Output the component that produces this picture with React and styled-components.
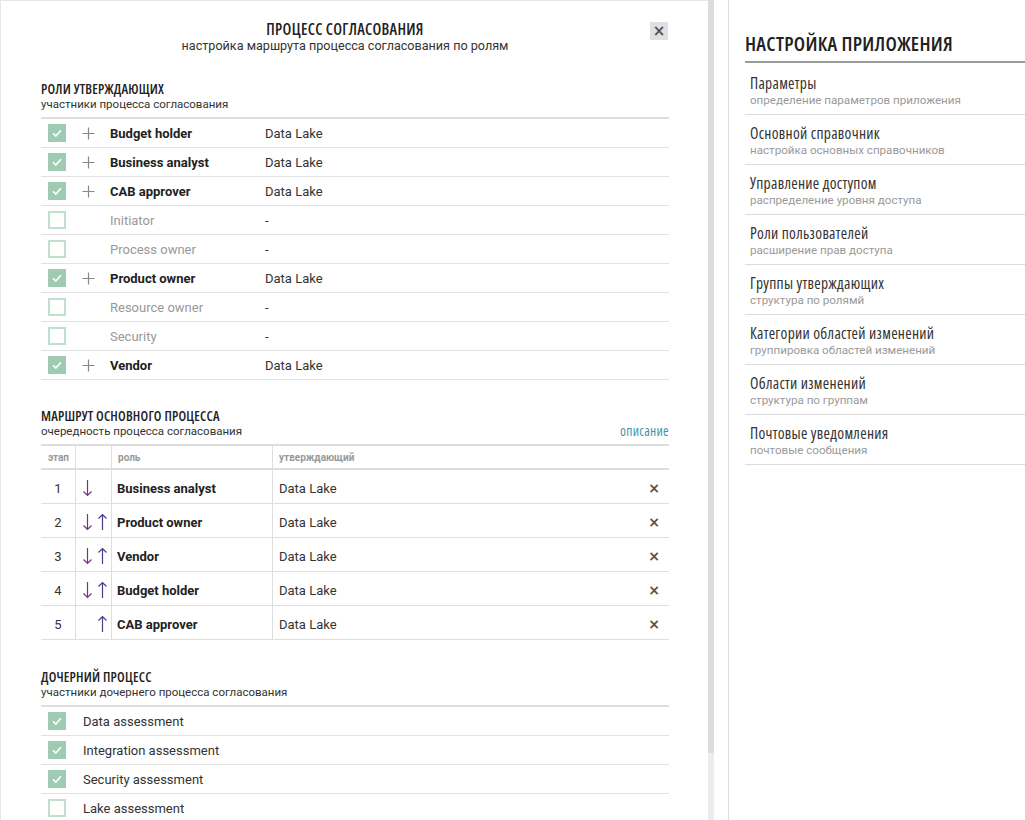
import React from "react";
import styled, { createGlobalStyle } from "styled-components";

const GlobalStyle = createGlobalStyle`
	html, body {
		margin: 0;
		padding: 0;
		background: #fff;
		font-family: Roboto, "Noto Sans", sans-serif;
		color: #222;
	}
	* { box-sizing: border-box; }
`;

const condensed = `
	font-family: "Open Sans", "DejaVu Sans Condensed", sans-serif;
	font-stretch: 75%;
`;

// Layout
const Page = styled.div`
	display: flex;
	width: 1025px;
	height: 820px;
	overflow: hidden;
`;

const Modal = styled.div`
	position: relative;
	width: 708px;
	height: 820px;
	border-top: 1px solid #e6e6e6;
	border-left: 1px solid #e6e6e6;
	padding: 0 39px 0 40px;
	overflow: hidden;
`;

const ScrollTrack = styled.div`
	width: 6px;
	height: 820px;
	background: #ececf0;
	display: flex;
	flex-direction: column;
`;

const ScrollThumb = styled.div`
	height: 753px;
	background: #dcdcdc;
`;

const Side = styled.aside`
	margin-left: 14px;
	flex: 1;
	border-left: 1px solid #dcdcdc;
	padding: 33px 0 0 16px;
`;

// Modal header
const Header = styled.div`
	padding: 19px 20px 0 0;
	text-align: center;
`;

const Title = styled.div`
	${condensed}
	font-weight: 600;
	font-size: 15.5px;
	letter-spacing: 0.3px;
	line-height: 18px;
	color: #222;
`;

const Subtitle = styled.div`
	font-size: 12.6px;
	line-height: 16px;
	color: #333;
`;

const CloseButton = styled.button`
	position: absolute;
	top: 21px;
	right: 40px;
	width: 18px;
	height: 18px;
	border: 0;
	padding: 0;
	background: #e0e0e0;
	color: #555;
	font-size: 15px;
	font-weight: 700;
	line-height: 18px;
	font-family: "DejaVu Sans", sans-serif;
`;

// Sections
const Section = styled.section`
	margin-top: ${(p) => p.$top}px;
`;

const SectionHead = styled.div`
	display: flex;
	justify-content: space-between;
	align-items: flex-end;
	padding-bottom: 5px;
	border-bottom: 2px solid #dedede;
`;

const SectionTitle = styled.div`
	${condensed}
	font-weight: 600;
	font-size: 13.5px;
	letter-spacing: 0.2px;
	line-height: 16px;
	color: #222;
`;

const SectionSub = styled.div`
	font-size: 11.5px;
	line-height: 15px;
	color: #333;
`;

const DescLink = styled.a`
	${condensed}
	font-size: 13.5px;
	letter-spacing: 0.3px;
	line-height: 15px;
	color: #3f93a8;
	text-decoration: none;
`;

// Role rows
const Row = styled.div`
	display: flex;
	align-items: center;
	height: 29px;
	border-bottom: 1px solid #e2e2e2;
	font-size: 13px;
`;

const CheckBox = styled.span`
	width: 18px;
	height: 18px;
	margin-left: 7px;
	flex: none;
	display: flex;
	align-items: center;
	justify-content: center;
	background: ${(p) => (p.$on ? "#9fcbb2" : "#fff")};
	border: ${(p) => (p.$on ? "none" : "2px solid #bfe0cc")};
`;

const PlusCell = styled.span`
	width: 44px;
	flex: none;
	display: flex;
	justify-content: center;
`;

const RoleName = styled.span`
	width: 155px;
	flex: none;
	font-weight: ${(p) => (p.$on ? 700 : 400)};
	color: ${(p) => (p.$on ? "#222" : "#999")};
`;

const RoleValue = styled.span`
	color: #333;
`;

const ChildLabel = styled.span`
	margin-left: 17px;
	color: #333;
`;

// Route table
const Table = styled.div`
	display: grid;
	grid-template-columns: 35px 36px 161px 1fr 30px;
`;

const HeadCell = styled.div`
	height: 24px;
	display: flex;
	align-items: center;
	padding-left: ${(p) => p.$pad ?? 6}px;
	border-right: ${(p) => (p.$line ? "1px solid #dedede" : "none")};
	border-bottom: 2px solid #dedede;
	font-size: 10px;
	font-weight: 700;
	color: #999;
`;

const Cell = styled.div`
	height: 34px;
	display: flex;
	align-items: center;
	justify-content: ${(p) => p.$justify || "flex-start"};
	padding: ${(p) => (p.$pad ? `3px 0 0 ${p.$pad}px` : "3px 0 0")};
	border-right: ${(p) => (p.$line ? "1px solid #dedede" : "none")};
	border-bottom: 1px solid #dedede;
	font-size: 13px;
	font-weight: ${(p) => (p.$bold ? 700 : 400)};
	color: ${(p) => (p.$bold ? "#222" : "#333")};
`;

const ArrowBox = styled.span`
	width: 15px;
	display: flex;
	justify-content: center;
	visibility: ${(p) => (p.$hidden ? "hidden" : "visible")};
`;

const Remove = styled.span`
	font-family: "DejaVu Sans", sans-serif;
	font-size: 14px;
	font-weight: 700;
	color: #555;
`;

// Side menu
const SideTitle = styled.div`
	${condensed}
	font-weight: 600;
	font-size: 20px;
	letter-spacing: 0.3px;
	line-height: 22px;
	color: #222;
	padding-bottom: 6px;
	margin-bottom: 2px;
	border-bottom: 2px solid #9a9a9a;
`;

const MenuItem = styled.div`
	height: 50px;
	padding: 9px 0 0 5px;
	border-bottom: 1px solid #dcdcdc;
`;

const MenuTitle = styled.div`
	${condensed}
	font-size: 15.5px;
	letter-spacing: 0.3px;
	line-height: 18px;
	color: #333;
`;

const MenuSub = styled.div`
	font-size: 11.6px;
	line-height: 16px;
	color: #9a9a9a;
`;

const Check = () => (
	<svg width="12" height="10" viewBox="0 0 12 10">
		<path d="M2 5.2 L4.8 8 L10 2.2" fill="none" stroke="#fff" strokeWidth="1.6" />
	</svg>
);

const Plus = () => (
	<svg width="13" height="13" viewBox="0 0 13 13">
		<path d="M6.5 0.5 V12.5 M0.5 6.5 H12.5" stroke="#888" strokeWidth="1.2" />
	</svg>
);

const DownArrow = () => (
	<svg width="11" height="18" viewBox="0 0 11 18">
		<path d="M5.5 1 V16.5 M1.5 12.5 L5.5 16.5 L9.5 12.5" fill="none" stroke="#6e3a78" strokeWidth="1.2" />
	</svg>
);

const UpArrow = () => (
	<svg width="11" height="18" viewBox="0 0 11 18">
		<path d="M5.5 17 V1.5 M1.5 5.5 L5.5 1.5 L9.5 5.5" fill="none" stroke="#473f8c" strokeWidth="1.2" />
	</svg>
);

const roles = [
	{ name: "Budget holder", on: true },
	{ name: "Business analyst", on: true },
	{ name: "CAB approver", on: true },
	{ name: "Initiator", on: false },
	{ name: "Process owner", on: false },
	{ name: "Product owner", on: true },
	{ name: "Resource owner", on: false },
	{ name: "Security", on: false },
	{ name: "Vendor", on: true },
];

const route = ["Business analyst", "Product owner", "Vendor", "Budget holder", "CAB approver"];

const children = [
	{ name: "Data assessment", on: true },
	{ name: "Integration assessment", on: true },
	{ name: "Security assessment", on: true },
	{ name: "Lake assessment", on: false },
];

const menu = [
	["Параметры", "определение параметров приложения"],
	["Основной справочник", "настройка основных справочников"],
	["Управление доступом", "распределение уровня доступа"],
	["Роли пользователей", "расширение прав доступа"],
	["Группы утверждающих", "структура по ролямй"],
	["Категории областей изменений", "группировка областей изменений"],
	["Области изменений", "структура по группам"],
	["Почтовые уведомления", "почтовые сообщения"],
];

const App = () => {
	return (
		<Page>
			<GlobalStyle />
			<Modal>
				<Header>
					<Title>ПРОЦЕСС СОГЛАСОВАНИЯ</Title>
					<Subtitle>настройка маршрута процесса согласования по ролям</Subtitle>
				</Header>
				<CloseButton>×</CloseButton>

				<Section $top={27}>
					<SectionHead>
						<div>
							<SectionTitle>РОЛИ УТВЕРЖДАЮЩИХ</SectionTitle>
							<SectionSub>участники процесса согласования</SectionSub>
						</div>
					</SectionHead>
					{roles.map((r) => (
						<Row key={r.name}>
							<CheckBox $on={r.on}>{r.on && <Check />}</CheckBox>
							<PlusCell>{r.on && <Plus />}</PlusCell>
							<RoleName $on={r.on}>{r.name}</RoleName>
							<RoleValue>{r.on ? "Data Lake" : "-"}</RoleValue>
						</Row>
					))}
				</Section>

				<Section $top={28}>
					<SectionHead>
						<div>
							<SectionTitle>МАРШРУТ ОСНОВНОГО ПРОЦЕССА</SectionTitle>
							<SectionSub>очередность процесса согласования</SectionSub>
						</div>
						<DescLink>описание</DescLink>
					</SectionHead>
					<Table>
						<HeadCell $line $pad={7}>этап</HeadCell>
						<HeadCell $line />
						<HeadCell $line>роль</HeadCell>
						<HeadCell>утверждающий</HeadCell>
						<HeadCell />
						{route.map((name, i) => (
							<React.Fragment key={name}>
								<Cell $line $justify="center">{i + 1}</Cell>
								<Cell $line $pad={4}>
									<ArrowBox $hidden={i === route.length - 1}><DownArrow /></ArrowBox>
									<ArrowBox $hidden={i === 0}><UpArrow /></ArrowBox>
								</Cell>
								<Cell $line $bold $pad={5}>{name}</Cell>
								<Cell $pad={6}>Data Lake</Cell>
								<Cell $justify="center">
									<Remove>×</Remove>
								</Cell>
							</React.Fragment>
						))}
					</Table>
				</Section>

				<Section $top={29}>
					<SectionHead>
						<div>
							<SectionTitle>ДОЧЕРНИЙ ПРОЦЕСС</SectionTitle>
							<SectionSub>участники дочернего процесса согласования</SectionSub>
						</div>
					</SectionHead>
					{children.map((c) => (
						<Row key={c.name}>
							<CheckBox $on={c.on}>{c.on && <Check />}</CheckBox>
							<ChildLabel>{c.name}</ChildLabel>
						</Row>
					))}
				</Section>
			</Modal>
			<ScrollTrack>
				<ScrollThumb />
			</ScrollTrack>
			<Side>
				<SideTitle>НАСТРОЙКА ПРИЛОЖЕНИЯ</SideTitle>
				{menu.map(([t, s]) => (
					<MenuItem key={t}>
						<MenuTitle>{t}</MenuTitle>
						<MenuSub>{s}</MenuSub>
					</MenuItem>
				))}
			</Side>
		</Page>
	);
};

export default App;
